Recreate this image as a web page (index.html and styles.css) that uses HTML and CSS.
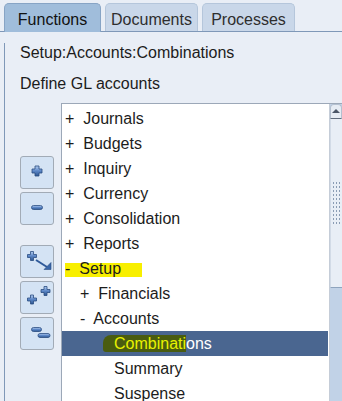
FILE: index.html
```html
<!DOCTYPE html>
<html lang="en">
<head>
  <meta charset="UTF-8">
  <title>Navigator</title>
  <link rel="stylesheet" href="styles.css">
</head>
<body>
  <nav class="tabs">
    <div class="tab active">Functions</div>
    <div class="tab">Documents</div>
    <div class="tab">Processes</div>
  </nav>

  <div class="panel">
    <p class="path">Setup:Accounts:Combinations</p>
    <p class="desc">Define GL accounts</p>

    <div class="work">
      <div class="tools">
        <button type="button" class="tool" title="Expand">
          <svg width="32" height="31" viewBox="0 0 32 31">
            <defs><linearGradient id="g1" x1="0" y1="0" x2="0" y2="1"><stop offset="0" stop-color="#b4cdf0"/><stop offset="0.5" stop-color="#5b86c6"/><stop offset="1" stop-color="#2d568f"/></linearGradient></defs>
            <path d="M14 9h4v3h3v4h-3v3h-4v-3h-3v-4h3z" fill="url(#g1)" stroke="#2a4c82" stroke-width="0.8"/>
          </svg>
        </button>
        <button type="button" class="tool" title="Collapse">
          <svg width="32" height="31" viewBox="0 0 32 31">
            <defs><linearGradient id="g2" x1="0" y1="0" x2="0" y2="1"><stop offset="0" stop-color="#b4cdf0"/><stop offset="0.5" stop-color="#5b86c6"/><stop offset="1" stop-color="#2d568f"/></linearGradient></defs>
            <rect x="10.5" y="12.5" width="11" height="4" rx="2" fill="url(#g2)" stroke="#2a4c82" stroke-width="0.8"/>
          </svg>
        </button>
        <button type="button" class="tool sep" title="Expand branch">
          <svg width="32" height="31" viewBox="0 0 32 31">
            <defs><linearGradient id="g3" x1="0" y1="0" x2="0" y2="1"><stop offset="0" stop-color="#b4cdf0"/><stop offset="0.5" stop-color="#5b86c6"/><stop offset="1" stop-color="#2d568f"/></linearGradient></defs>
            <path d="M9.5 5.5h3v3h3v3h-3v3h-3v-3h-3v-3h3z" fill="url(#g3)" stroke="#2a4c82" stroke-width="0.8"/>
            <line x1="15" y1="14" x2="26" y2="21" stroke="#2f5a9a" stroke-width="2"/>
            <path d="M30 16.5v7h-7z" fill="#3a67a8" stroke="#2a4c82" stroke-width="0.6"/>
          </svg>
        </button>
        <button type="button" class="tool" title="Expand all">
          <svg width="32" height="31" viewBox="0 0 32 31">
            <defs><linearGradient id="g4" x1="0" y1="0" x2="0" y2="1"><stop offset="0" stop-color="#b4cdf0"/><stop offset="0.5" stop-color="#5b86c6"/><stop offset="1" stop-color="#2d568f"/></linearGradient></defs>
            <path d="M23 4.5h3v3h3v3h-3v3h-3v-3h-3v-3h3z" fill="url(#g4)" stroke="#2a4c82" stroke-width="0.8"/>
            <path d="M9.5 13h3v3h3v3h-3v3h-3v-3h-3v-3h3z" fill="url(#g4)" stroke="#2a4c82" stroke-width="0.8"/>
          </svg>
        </button>
        <button type="button" class="tool" title="Collapse all">
          <svg width="32" height="31" viewBox="0 0 32 31">
            <defs><linearGradient id="g5" x1="0" y1="0" x2="0" y2="1"><stop offset="0" stop-color="#b4cdf0"/><stop offset="0.5" stop-color="#5b86c6"/><stop offset="1" stop-color="#2d568f"/></linearGradient></defs>
            <rect x="10.5" y="9.5" width="10" height="4" rx="2" fill="url(#g5)" stroke="#2a4c82" stroke-width="0.8"/>
            <rect x="17" y="15.5" width="12" height="4" rx="2" fill="url(#g5)" stroke="#2a4c82" stroke-width="0.8"/>
          </svg>
        </button>
      </div>

      <div class="tree-box">
        <div class="tree">
          <div class="row">+  Journals</div>
          <div class="row">+  Budgets</div>
          <div class="row">+  Inquiry</div>
          <div class="row">+  Currency</div>
          <div class="row">+  Consolidation</div>
          <div class="row">+  Reports</div>
          <div class="row"><span class="mark">-  Setup</span></div>
          <div class="row l2">+  Financials</div>
          <div class="row l2">-  Accounts</div>
          <div class="row leaf sel"><span class="pen">Combinati</span>ons</div>
          <div class="row leaf">Summary</div>
          <div class="row leaf">Suspense</div>
        </div>
        <div class="scroll">
          <div class="scroll-up"><span class="arrow"></span></div>
          <div class="scroll-thumb"><span class="grip"></span></div>
        </div>
      </div>
    </div>
  </div>
</body>
</html>
```

FILE: styles.css
```css
body {
  margin: 0;
  height: 401px;
  overflow: hidden;
  background-color: #e9eef6;
  font-family: "Liberation Sans", Arial, sans-serif;
  font-size: 16px;
  color: #1c1c1c;
}
.tabs {
  display: flex;
  gap: 4px;
  padding: 3px 0 0 4px;
  border-bottom: 1px solid #7f98b8;
}
.tab {
  box-sizing: border-box;
  width: 93px;
  height: 28px;
  padding-top: 5px;
  line-height: 22px;
  text-align: center;
  background-color: #c9d7e9;
  border: 1px solid #b5c6db;
  border-bottom: none;
  border-radius: 5px 5px 0 0;
  color: #2e2e2e;
}
.tab.active {
  width: 97px;
  height: 29px;
  margin-bottom: -1px;
  background-color: #a0bddb;
  border-color: #87a4c5;
  color: #111;
}
.panel {
  margin-left: 4px;
  border-left: 1px solid #7f98b8;
  height: 370px;
}
.path {
  margin: 11px 0 0 15px;
  line-height: 20px;
}
.desc {
  margin: 11px 0 0 15px;
  line-height: 20px;
}
.work {
  display: flex;
  gap: 7px;
  margin-top: 9px;
  padding-left: 15px;
}
.tools {
  display: flex;
  flex-direction: column;
  gap: 3px;
  width: 34px;
  padding-top: 53px;
}
.tool {
  width: 34px;
  height: 33px;
  padding: 0;
  background-color: #d4e3f4;
  border: 1px solid #a2abb6;
  border-radius: 3px;
  cursor: pointer;
}
.tool svg {
  display: block;
}
.tool.sep {
  margin-top: 17px;
}
.tree-box {
  flex: 1;
  display: flex;
  height: 300px;
  background-color: #fff;
  border-top: 1px solid #9ca8b8;
  border-left: 1px solid #9ca8b8;
}
.tree {
  flex: 1;
  padding-top: 2px;
}
.row {
  height: 25px;
  line-height: 25px;
  padding-left: 3px;
  white-space: pre;
}
.row.l2 {
  padding-left: 18px;
}
.row.leaf {
  padding-left: 52px;
}
.row.sel {
  background-color: #4a6690;
  color: #fff;
  margin-right: 1px;
}
.mark {
  padding-right: 21px;
  background: linear-gradient(transparent 3px, #f8ef00 3px, #f8ef00 17px, transparent 17px);
}
.pen {
  margin-left: -11px;
  padding-left: 11px;
  background-color: #4a5c10;
  border-radius: 8px 0 0 3px;
  color: #e8f200;
}
.scroll {
  width: 12px;
  display: flex;
  flex-direction: column;
  background-color: #c1d2e7;
  border-left: 1px solid #c5cdd8;
}
.scroll-up {
  box-sizing: border-box;
  height: 15px;
  padding-top: 4px;
  display: flex;
  justify-content: center;
  background-color: #e6ecf4;
  border: 1px solid #b4c0d0;
  border-bottom-color: #5f6b7c;
  border-radius: 4px 4px 0 0;
}
.arrow {
  width: 0;
  height: 0;
  border-left: 4px solid transparent;
  border-right: 4px solid transparent;
  border-bottom: 4px solid #4b5668;
}
.scroll-thumb {
  box-sizing: border-box;
  height: 169px;
  display: flex;
  align-items: center;
  justify-content: center;
  background-color: #e8eef6;
  border-left: 1px solid #d2dbe7;
  border-bottom: 1px solid #8ea4be;
}
.grip {
  width: 9px;
  height: 44px;
  background-image: radial-gradient(circle, #8a9cb4 0.8px, transparent 1.1px);
  background-size: 3px 4px;
}
```
